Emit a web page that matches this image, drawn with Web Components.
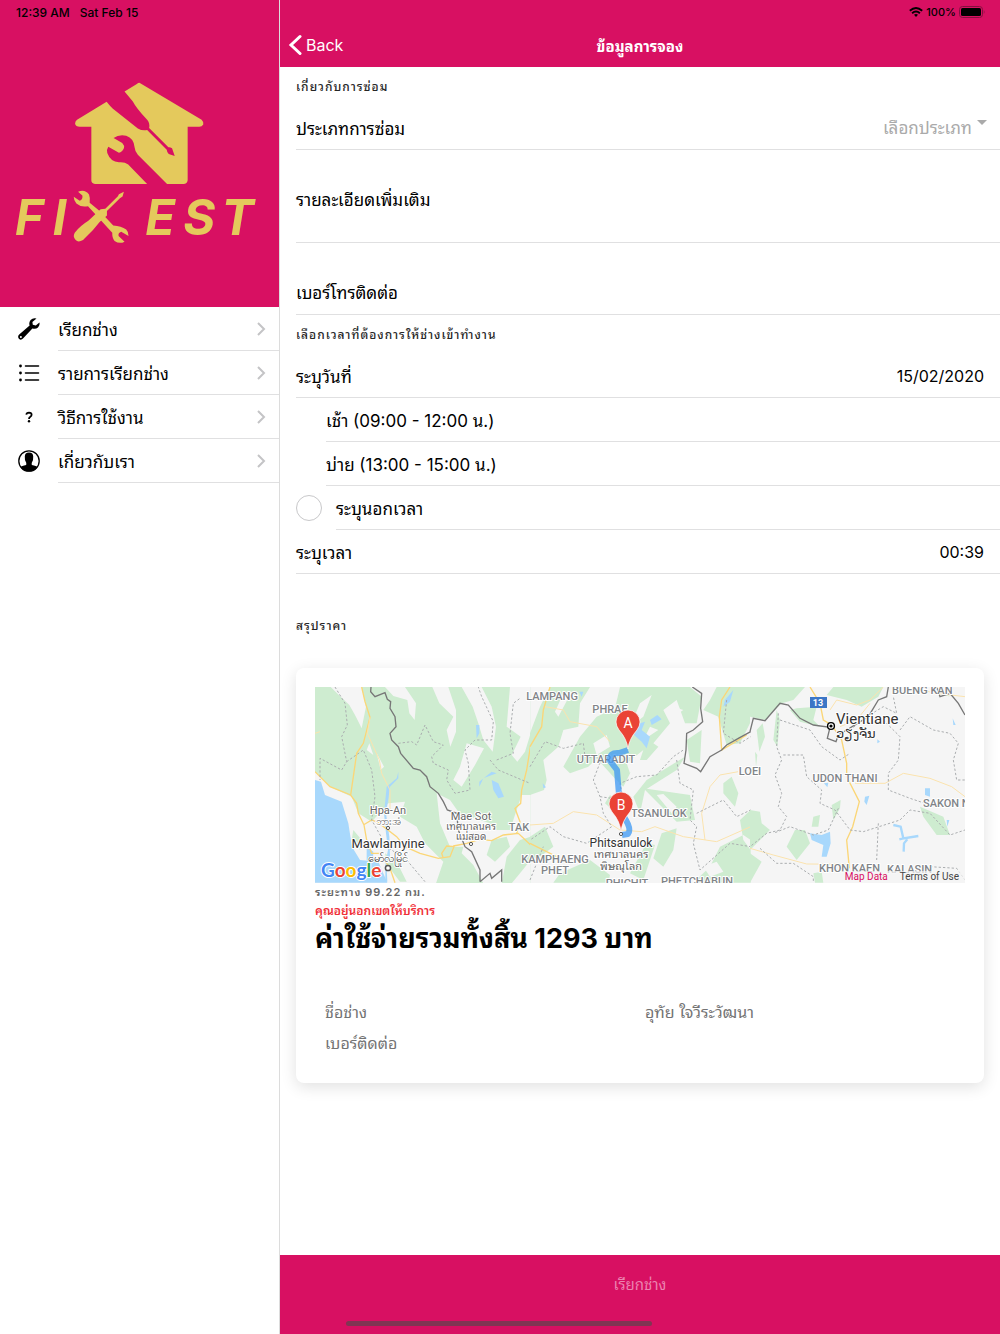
<!DOCTYPE html>
<html lang="th">
<head>
<meta charset="utf-8">
<meta name="viewport" content="width=device-width, initial-scale=1">
<title>FIXEST</title>
<style>
    body {
        margin: 0;
        font-family: Inter, "Noto Sans Thai Looped", Loma, Waree, "Noto Sans Thai", "Noto Sans", sans-serif;
        font-size: 17px;
        color: #000;
        --brand: #d81062;
        --line: #e0e0e1;
    }
</style>
</head>
<body>
<booking-app></booking-app>

<script>
class BrandLogo extends HTMLElement {
    connectedCallback() {
        this.attachShadow({ mode: 'open' });
        this.shadowRoot.innerHTML = `
            <style>
                :host { display: block; }
                svg { display: block; width: 100%; fill: #e4c95c; }
                text { font: italic 700 147px Inter, sans-serif; }
            </style>
            <svg viewBox="0 0 840 600" role="img" aria-label="FIXEST">
                <path d="M421 69 L607 180 Q614 187 612 194 Q608 201 600 201 L565 201 L565 362 Q564 373 552 373 L503 373 L415 285 Q406 275 405 262 Q403 236 380 228 Q358 223 342 235 L368 250 Q376 258 373 266 Q368 278 358 279 L326 261 Q320 270 323 280 Q333 307 358 308 Q375 306 386 315 L443 373 L286 373 Q275 372 275 362 L275 201 L240 201 Q228 201 226 192 Q226 184 232 180 L321 126 Q332 140 340 147 L415 206 Q428 214 443 211 L502 270 Q503 279 508 283 L526 289 L518 266 Q512 262 507 263 L449 205 Q452 190 443 180 Q410 145 400 125 L375 95 L412 72 Q417 68 421 69Z"/>
                <path d="M235 397 Q255 388 268 405 Q272 415 270 430 L300 455 L341 498 Q365 500 380 510 Q388 518 387 530 L365 517 Q355 520 357 530 L375 547 Q360 555 345 545 Q337 535 338 520 L265 440 Q245 445 230 432 Q222 424 222 412 L240 424 Q250 420 248 408Z"/>
                <path d="M303 449 L317 448 L355 410 L358 404 L373 397 L369 411 L361 416 L322 455 L322 468 L300 488 Q290 500 280 512 L250 542 Q235 551 228 542 Q218 532 225 520 Q240 500 266 484Z"/>
                <text x="45 159" y="527">FI</text>
                <text x="437 552 666" y="527">EST</text>
            </svg>
        `;
    }
}

class MenuItem extends HTMLElement {
    connectedCallback() {
        this.attachShadow({ mode: 'open' });
        this.shadowRoot.innerHTML = `
            <style>
                :host { display: block; }
                a {
                    display: flex;
                    align-items: stretch;
                    height: 44px;
                    color: inherit;
                    text-decoration: none;
                }
                .icon {
                    display: flex;
                    align-items: center;
                    justify-content: center;
                    width: 58px;
                }
                .inner {
                    flex: 1;
                    display: flex;
                    align-items: center;
                    justify-content: space-between;
                    padding-right: 13px;
                    border-bottom: 1px solid var(--line);
                    box-sizing: border-box;
                }
                .chevron {
                    width: 9px;
                    height: 14px;
                    fill: none;
                    stroke: #c4c4c6;
                    stroke-width: 2;
                }
            </style>
            <a href="${this.getAttribute('href')}">
                <span class="icon"><slot name="icon"></slot></span>
                <span class="inner">
                    <span><slot></slot></span>
                    <svg class="chevron" viewBox="0 0 9 14"><path d="M1 1 L7 7 L1 13"/></svg>
                </span>
            </a>
        `;
    }
}

class SideMenu extends HTMLElement {
    connectedCallback() {
        this.attachShadow({ mode: 'open' });
        this.shadowRoot.innerHTML = `
            <style>
                :host {
                    display: block;
                    box-sizing: border-box;
                    border-right: 1px solid #dcdcdc;
                    background: #fff;
                }
                header {
                    background: var(--brand);
                    padding-bottom: 48px;
                }
                .status {
                    display: flex;
                    gap: 10px;
                    height: 24px;
                    align-items: center;
                    padding-left: 16px;
                    font: 500 12px Inter, sans-serif;
                }
                brand-logo { padding-top: 36px; }
                svg { width: 22px; height: 22px; }
            </style>
            <header>
                <div class="status"><span>12:39 AM</span><span>Sat Feb 15</span></div>
                <brand-logo></brand-logo>
            </header>
            <nav>
                <menu-item href="#call">
                    <svg slot="icon" viewBox="0 0 22 22"><path d="M18.5 .6 Q15 -.4 12.6 2 Q10.6 4.4 11.6 7.4 L1.2 16.6 Q-.8 18.6 .9 20.8 Q3 22.6 5 20.6 L14.4 10.4 Q17.6 11.6 20 9.4 Q22.2 7.2 21.4 4.4 L17.8 7.4 L14.8 6.8 L14.4 4Z"/><circle cx="2.9" cy="19" r="1" fill="#fff"/></svg>
                    เรียกช่าง
                </menu-item>
                <menu-item href="#orders">
                    <svg slot="icon" viewBox="0 0 22 22"><path d="M7.5 4h13M7.5 11h13M7.5 18h13" stroke="#000" stroke-width="1.6" stroke-linecap="round"/><circle cx="2.5" cy="4" r="1.4"/><circle cx="2.5" cy="11" r="1.4"/><circle cx="2.5" cy="18" r="1.4"/></svg>
                    รายการเรียกช่าง
                </menu-item>
                <menu-item href="#howto">
                    <svg slot="icon" viewBox="0 0 22 22"><path d="M8.3 8.7 Q8.5 6.6 11 6.6 Q13.6 6.7 13.6 8.7 Q13.6 9.8 12.3 10.7 Q11 11.5 11 13" fill="none" stroke="#000" stroke-width="1.8"/><circle cx="11" cy="15.2" r="1.2"/></svg>
                    วิธีการใช้งาน
                </menu-item>
                <menu-item href="#about">
                    <svg slot="icon" viewBox="0 0 22 22"><circle cx="11" cy="11" r="10.2" fill="none" stroke="#000" stroke-width="1.3"/><path d="M6.8 6.5 Q6.8 2.6 11 2.6 Q15.2 2.6 15.2 6.5 Q15.6 10 13.7 13 L13.8 15 Q18.5 16 19.4 17.2 Q16 21.5 11 21.5 Q6 21.5 2.6 17.2 Q3.5 16 8.2 15 L8.3 13 Q6.4 10 6.8 6.5Z"/></svg>
                    เกี่ยวกับเรา
                </menu-item>
            </nav>
        `;
    }
}

class PageHeader extends HTMLElement {
    connectedCallback() {
        this.attachShadow({ mode: 'open' });
        this.shadowRoot.innerHTML = `
            <style>
                :host {
                    display: block;
                    background: var(--brand);
                    color: #fff;
                }
                .status {
                    display: flex;
                    justify-content: flex-end;
                    align-items: center;
                    gap: 3px;
                    height: 24px;
                    padding-right: 15px;
                    color: #000;
                    font: 500 11px Inter, sans-serif;
                }
                .wifi { width: 14px; height: 10px; }
                .battery { width: 26px; height: 12px; }
                .toolbar {
                    display: grid;
                    grid-template-columns: 1fr auto 1fr;
                    align-items: center;
                    height: 41px;
                    padding: 0 8px 2px;
                }
                button {
                    display: flex;
                    align-items: center;
                    gap: 4px;
                    justify-self: start;
                    border: 0;
                    padding: 0;
                    background: none;
                    color: inherit;
                    font: 400 16px Inter, sans-serif;
                }
                button svg { width: 14px; height: 22px; }
                h1 { margin: 0; padding-top: 1px; font-size: 15px; font-weight: 700; }
            </style>
            <div class="status">
                <svg class="wifi" viewBox="0 0 14 10" fill="none" stroke="#000" stroke-width="1.9"><path d="M.8 3.8 Q7 -1.8 13.2 3.8"/><path d="M3.1 6.2 Q7 2.8 10.9 6.2"/><path d="M5 7.8 Q7 6.2 9 7.8 L7 10Z" fill="#000" stroke="none"/></svg>
                <span>100%</span>
                <svg class="battery" viewBox="0 0 26 12"><rect x=".5" y=".5" width="23" height="11" rx="3" fill="none" stroke="#84103f"/><rect x="2" y="2" width="20" height="8" rx="1.5"/><path d="M24.8 4 Q26.2 6 24.8 8Z" fill="#84103f"/></svg>
            </div>
            <div class="toolbar">
                <button type="button">
                    <svg viewBox="0 0 14 22" fill="none" stroke="#fff" stroke-width="3" stroke-linecap="round"><path d="M12 2.5 L3 11 L12 19.5"/></svg>
                    Back
                </button>
                <h1><slot></slot></h1>
            </div>
        `;
    }
}

class ListHeader extends HTMLElement {
    connectedCallback() {
        this.attachShadow({ mode: 'open' });
        this.shadowRoot.innerHTML = `
            <style>
                :host { display: block; }
                h2 {
                    display: flex;
                    align-items: center;
                    height: 37px;
                    margin: 0;
                    padding: 0 0 2px 16px;
                    font-size: 12px;
                    font-weight: 500;
                    letter-spacing: 1px;
                    color: #262626;
                }
            </style>
            <h2><slot></slot></h2>
        `;
    }
}

// A row with an inset bottom line; "start" holds what sits left of the line.
class ListRow extends HTMLElement {
    connectedCallback() {
        this.attachShadow({ mode: 'open' });
        this.shadowRoot.innerHTML = `
            <style>
                :host {
                    display: flex;
                    align-items: stretch;
                    min-height: 44px;
                    padding-left: 16px;
                }
                .start { display: flex; align-items: center; }
                .inner {
                    flex: 1;
                    display: flex;
                    align-items: center;
                    gap: 16px;
                    padding: var(--row-padding, 0) 16px 0 0;
                    border-bottom: 1px solid var(--line);
                }
            </style>
            <div class="start"><slot name="start"></slot></div>
            <div class="inner"><slot></slot></div>
        `;
    }
}

class RouteMap extends HTMLElement {
    connectedCallback() {
        this.attachShadow({ mode: 'open' });
        this.shadowRoot.innerHTML = `
            <style>
                :host { display: block; position: relative; }
                svg { display: block; width: 100%; background: #f5f5f5; }
                .green path { fill: #ceecd0; }
                .land path { fill: #f5f5f5; }
                .water path { fill: #a8d8fc; }
                .road path { fill: none; stroke: #fbd677; stroke-width: 4; }
                .road .minor { stroke: #fbe3ae; stroke-width: 3; }
                .dash path { fill: none; stroke: #aaadaf; stroke-width: 3; stroke-dasharray: 7 6; }
                .border path { fill: none; stroke: #777; stroke-width: 4; }
                text {
                    font-family: Roboto, "Noto Sans Thai Looped", Loma, Waree, "Noto Sans Thai", "Noto Sans", sans-serif;
                    fill: #666;
                    stroke: #fff;
                    stroke-width: 2px;
                    paint-order: stroke;
                    stroke-linejoin: round;
                }
                .area text { font-size: 11px; font-weight: 500; fill: #818488; }
                .mid text { text-anchor: middle; }
                .town text { font-size: 11px; }
                .town .local { font-size: 10px; }
                .city text { font-size: 13px; fill: #333; }
                .city .local { font-size: 11px; }
                .city .capital { font-size: 15px; }
                .city .small { font-size: 12px; }
                .pin text { font-size: 14px; fill: #fff; stroke: none; text-anchor: middle; }
                .badge { font-size: 9px; font-weight: 700; fill: #fff; stroke: none; text-anchor: middle; }
                .google { font: 700 19px Lato, sans-serif; }
                footer {
                    position: absolute;
                    right: 0;
                    bottom: 0;
                    display: flex;
                    gap: 12px;
                    padding: 0 6px 0 4px;
                    background: rgba(245, 245, 245, 0.7);
                    font: 10px/12px Roboto, sans-serif;
                }
                a { color: #444; text-decoration: none; }
                a.data { color: var(--brand); }
            </style>
            <svg viewBox="0 0 650 196" role="img" aria-label="Route map">
                <g transform="matrix(.33333 0 0 .33333 -5 -7)">
                    <g class="green"><path d="M15 21H662V610H15Z"/></g>
                    <g class="land">
                        <path d="M62 21H155L168 80 155 145 135 105 118 75 92 50Z"/>
                        <path d="M225 21H285L318 70 314 120 298 100 292 60 250 48Z"/>
                        <path d="M367 21H415L438 90 438 155 421 200 410 150 430 110 388 70Z"/>
                        <path d="M455 21H515L545 80 558 140 548 215 520 180 505 130 488 80Z"/>
                        <path d="M600 21H662V160L645 215 622 245 605 225 632 170 590 140Z"/>
                        <path d="M15 275 60 320 125 350 145 400 185 425 235 370 285 365 270 410 320 440 345 490 400 545 378 610H15Z"/>
                        <path d="M470 190 522 205 495 255 455 320 430 300 450 260Z"/>
                        <path d="M380 340 420 360 448 400 540 430 560 450 600 450 635 345 662 345V610H520L490 555 455 520 460 500 420 500 390 430Z"/>
                        <path d="M200 220 222 260 212 270ZM178 190 190 225 170 210Z"/>
                    </g>
                    <g class="green">
                        <path d="M545 480 590 470 600 500 555 545 530 525Z"/>
                        <path d="M590 530 630 480 662 470V540L630 580 605 610H575Z"/>
                        <path d="M130 450 155 480 150 510 125 480ZM225 520 260 545 290 605H270L232 555Z"/>
                    </g>
                    <g class="water">
                        <path d="M15 300 33 305 45 345 95 365 115 430 126 500 150 540 205 545 232 608H15Z"/>
                        <path d="M170 500 190 515 188 550 170 540ZM498 135H508V160L500 175ZM545 300 565 310 582 350 565 355 550 330ZM508 305 545 275 560 280 520 295 508 320Z"/>
                        <path d="M265 275V295L240 320 236 350 228 400 238 470 240 530 230 560 232 605 226 605 226 555 234 510 228 460 222 400 230 320 260 295Z"/>
                    </g>
                    <g class="road">
                        <path d="M155 21 165 65 180 112 160 190 140 220 130 290 122 345M15 275 60 320 122 345 140 370 145 400 162 435M160 435 185 420 205 428 260 470 285 500 330 520 385 535 420 530 432 500 410 498 395 520 400 535M430 498 470 490 510 478 545 482 580 465 625 460 662 495M662 195 650 270 635 330 632 370 615 385 630 425 620 460M162 435 170 480 185 520H210L240 565 255 608"/>
                        <path class="minor" d="M180 112 172 160 208 240 215 280 240 330 240 390M15 160 30 155"/>
                    </g>
                    <g class="dash"><path d="M75 21 105 70 112 135 95 170 110 245 95 270 30 235 30 300M110 245 160 210 185 270 195 350 185 420 230 500 290 540 345 605M265 190 305 185 320 195 345 135 370 185 400 195 365 230 370 250 415 270 410 300 435 340 480 330 475 250 465 210 495 180 545 180 550 125 515 50 505 21M560 240 610 220 600 160 610 70 630 55M540 240 565 270 660 310"/></g>
                    <g class="border"><path d="M183 21 182 35 195 50 225 38 232 58 242 65 240 85 255 110 258 140 240 160 245 180 265 200 272 220 310 265 330 270 350 290 360 320 385 340 400 365 412 390 440 400 445 450 465 500 485 515 510 570V605M510 605 540 580 545 595 575 570V605"/></g>
                </g>
                <g transform="matrix(.33333 0 0 .33333 215 -7)">
                    <g class="green">
                        <path d="M0 160 30 80 60 21H180L150 70 145 140 100 150 85 200 40 240 50 300 42 330 0 345Z"/>
                        <path d="M150 170 200 110 255 85 270 21H480L515 50 500 130 465 130 440 60 400 90 420 130 370 190 385 200 350 240 320 240 280 320 250 290 200 235 175 260 120 280 100 260Z"/>
                        <path d="M470 180 515 150 510 250 480 245ZM350 300 400 270 465 230 440 270 345 330 330 400 310 350Z"/>
                        <path d="M0 470 45 440 70 500 30 530 0 540ZM225 370 240 345 290 390 275 415ZM90 580 180 540 240 585 235 608H70Z"/>
                        <path d="M395 460 440 445 430 510 400 560 370 535ZM340 325 480 345 495 420 440 425ZM580 310 605 290 625 340 615 380 580 340Z"/>
                        <path d="M520 90 540 60 560 21H660V130L630 190 590 195 565 110ZM570 500 640 465 662 480V608H490L540 560ZM350 490 375 495 340 600 300 580ZM662 390 630 420 640 480 662 510Z"/>
                    </g>
                    <g class="land">
                        <path d="M100 40 125 35 85 110 75 95ZM330 70 365 45 340 110 300 140ZM360 140 385 150 340 180ZM190 190 230 165 240 200 200 225ZM290 250 340 210 330 240 300 280ZM430 80 460 90 430 110ZM380 345 400 342 440 380 425 400ZM520 560 560 545 580 575 540 590Z"/>
                    </g>
                    <g class="water">
                        <path d="M312 165 330 130 345 125 335 150 360 170 350 205 335 185ZM360 120 382 105 395 118 365 135ZM585 60 610 30 600 65 580 80ZM148 35H160L155 50ZM38 310 48 322 40 325Z"/>
                    </g>
                    <g class="road">
                        <path d="M60 21 40 90 35 140 0 200M600 21 575 60 568 110 575 210 650 165M0 490 80 530"/>
                        <path class="minor" d="M0 435 70 430 130 395 200 405 270 450 335 455 375 440 460 470 560 485 662 440M45 80 100 90 120 125 200 140 240 185M525 480 515 400 540 320 570 285 625 275"/>
                    </g>
                    <g class="dash"><path d="M0 260 45 185 100 205 160 190 165 230 215 235 190 300 210 350 220 400 245 440 170 490 100 470 60 440 0 480M210 350 280 360 270 310 320 290 380 285 430 230 460 210M440 240 450 310 490 330 480 420 500 440 490 490 510 570 600 490 662 500M500 400 580 360 620 410 662 390M590 60 580 160 630 190 662 170M0 600 40 500"/></g>
                    <g class="border"><path d="M487 21 515 40 512 85 518 125 490 150 470 160 468 210 462 250 500 265 512 275 540 230 575 210 590 195 625 175 662 155"/></g>
                </g>
                <g transform="matrix(.33333 0 0 .33333 435 -7)">
                    <g class="green">
                        <path d="M0 21H165L130 60 95 70 45 120 0 110ZM140 85 200 80 190 120 210 140 150 125 120 90ZM230 45 250 21H400L385 50 335 80 290 60Z"/>
                        <path d="M20 150 38 130 45 170 28 215ZM80 90 90 120 82 200 70 180ZM245 375 272 360 270 385 250 420ZM190 410 210 405 205 440 185 440Z"/>
                        <path d="M0 390 30 395 35 430 60 450 0 510ZM135 450 165 450 180 490 140 540 110 500ZM510 380 580 410 600 465 560 465 520 410ZM0 520 35 545 0 608ZM190 580 215 575 220 608H195ZM15 215 22 225 18 260ZM560 21 600 50 570 40Z"/>
                    </g>
                    <g class="water">
                        <path d="M180 460 215 465 240 455 242 490 230 530 215 530 220 495 185 480ZM345 350 358 347 350 375 343 365ZM525 325 540 325 540 350 525 345ZM608 115 617 135 610 135ZM222 310 235 308 232 322ZM590 420 598 420 592 440ZM382 178 390 185 382 190Z"/>
                    </g>
                    <path d="M430 435 452 440 460 475 505 468M472 478 462 490 461 515M460 475 448 478" fill="none" stroke="#a8d8fc" stroke-width="7"/>
                    <g class="road">
                        <path d="M180 21 210 70 220 120 245 135 275 180 290 250 290 290 328 365 308 440 290 480 298 565"/>
                        <path class="minor" d="M315 310H405L460 280 540 295 605 320 645 350M0 505 70 525 170 552 300 553M240 90 260 60 320 75 360 60 400 21M360 70 320 120 270 140M470 21 560 40 645 50"/>
                    </g>
                    <g class="dash"><path d="M85 100 80 200 95 240 75 285 95 340 85 380 110 410 90 450 50 460 0 500M90 120 180 150 215 200 270 240 300 220M100 225 160 225 170 290 215 330 210 370 255 390 300 450 340 455 450 420 480 390 540 400 600 465 645 450M265 385 235 450 190 465 120 440 70 460M400 120 450 170 445 240 415 280 415 330 480 355 540 375M450 150 480 110 550 150 600 160 625 190 610 240 620 300 645 300M385 430 380 540M300 150 350 110 400 80 440 100 430 50M30 505 80 550 130 550 190 590V608M540 560 620 565 645 600"/></g>
                    <g class="border"><path d="M0 155 10 115 45 122 90 70 115 75 150 115 190 135 240 142 232 175 258 185 265 165 290 150 355 110 385 60 410 50 415 21M560 21 570 50 600 40 625 70 645 105"/></g>
                </g>
                <g class="area">
                    <g class="mid">
                        <text x="237" y="13">LAMPANG</text>
                        <text x="295" y="26">PHRAE</text>
                        <text x="291" y="76">UTTARADIT</text>
                        <text x="435" y="88">LOEI</text>
                        <text x="530" y="95">UDON THANI</text>
                        <text x="204" y="144">TAK</text>
                        <text x="240" y="176">KAMPHAENG</text>
                        <text x="240" y="187">PHET</text>
                        <text x="312" y="200">PHICHIT</text>
                        <text x="382" y="198">PHETCHABUN</text>
                    </g>
                    <text x="577" y="7">BUENG KAN</text>
                    <text x="316" y="130">TSANULOK</text>
                    <text x="608" y="120">SAKON N</text>
                    <text x="504" y="185">KHON KAEN</text>
                    <text x="572" y="186">KALASIN</text>
                </g>
                <path d="M313 63 L304 66 Q294 65 295 74 L302 83 L304 108 L309 130 Q317 142 313 147 L307 148" fill="none" stroke="#3b97f3" stroke-opacity=".75" stroke-width="6" stroke-linejoin="round"/>
                <g class="town mid">
                    <text x="73" y="127">Hpa-An</text>
                    <text class="local" x="73" y="138">ဘားအံ</text>
                    <text x="156" y="133">Mae Sot</text>
                    <text class="local" x="156" y="143">เทศบาลนคร</text>
                    <text class="local" x="156" y="153">แม่สอด</text>
                    <text x="306" y="171">เทศบาลนคร</text>
                    <text x="306" y="183">พิษณุโลก</text>
                </g>
                <g class="city">
                    <text x="73" y="161" text-anchor="middle">Mawlamyine</text>
                    <text class="local" x="73" y="175" text-anchor="middle">မော်လမြိုင်</text>
                    <text class="capital" x="521" y="37">Vientiane</text>
                    <text x="521" y="51">ວຽງຈັນ</text>
                    <text class="small" x="306" y="160" text-anchor="middle">Phitsanulok</text>
                </g>
                <g fill="#fff" stroke="#555">
                    <circle cx="73" cy="141" r="1.6"/><circle cx="156" cy="157" r="1.6"/>
                    <circle cx="73" cy="181" r="2.6" stroke-width="1.5"/><circle cx="306" cy="147" r="1.6"/>
                </g>
                <circle cx="516" cy="39" r="3.4" fill="#fff" stroke="#000" stroke-width="1.4"/><circle cx="516" cy="39" r="1.6"/>
                <rect x="495" y="10" width="17" height="11" fill="#3b76c6"/>
                <text class="badge" x="503" y="19">13</text>
                <g class="pin">
                    <path d="M313 62 Q312 52 304 43 Q301 39 301 35 A12 12 0 0 1 325 35 Q325 39 322 43 Q314 52 313 62Z" fill="#ea4335" stroke="#fff" stroke-width=".7"/>
                    <text x="313" y="41">A</text>
                    <path d="M306 145 Q305 134 297 125 Q294 121 294 117 A12 12 0 0 1 318 117 Q318 121 315 125 Q307 134 306 145Z" fill="#ea4335" stroke="#fff" stroke-width=".7"/>
                    <text x="306" y="123">B</text>
                </g>
                <text class="google" x="6" y="190"><tspan fill="#4285f4">G</tspan><tspan fill="#ea4335">o</tspan><tspan fill="#fbbc05">o</tspan><tspan fill="#4285f4">g</tspan><tspan fill="#34a853">l</tspan><tspan fill="#ea4335">e</tspan></text>
            </svg>
            <footer><a class="data" href="#map-data">Map Data</a><a href="#terms">Terms of Use</a></footer>
        `;
    }
}

class PriceCard extends HTMLElement {
    connectedCallback() {
        this.attachShadow({ mode: 'open' });
        this.shadowRoot.innerHTML = `
            <style>
                :host {
                    display: block;
                    margin: 23px 16px 0;
                    padding: 19px 19px 24px;
                    border-radius: 8px;
                    background: #fff;
                    box-shadow: 0 4px 16px rgba(0, 0, 0, 0.12);
                }
                p {
                    margin: 0;
                    font-size: 12px;
                    font-weight: 600;
                    line-height: 20px;
                    color: #666;
                }
                p.distance {
                    font-size: 11px;
                    line-height: 18px;
                    letter-spacing: 1px;
                }
                p.warn { color: #f03038; }
                h2 {
                    margin: 0 0 40px;
                    font-size: 27px;
                    line-height: 36px;
                    font-weight: 700;
                }
                dl {
                    display: grid;
                    grid-template-columns: 1fr 1fr;
                    margin: 0;
                    padding: 0 5px;
                    font-size: 16px;
                    color: #737373;
                }
                dt, dd { margin: 0; padding: 0 5px; line-height: 31px; }
            </style>
            <route-map></route-map>
            <p class="distance">ระยะทาง 99.22 กม.</p>
            <p class="warn">คุณอยู่นอกเขตให้บริการ</p>
            <h2>ค่าใช้จ่ายรวมทั้งสิ้น 1293 บาท</h2>
            <dl>
                <dt>ชื่อช่าง</dt><dd>อุทัย ใจวีระวัฒนา</dd>
                <dt>เบอร์ติดต่อ</dt><dd></dd>
            </dl>
        `;
    }
}

class BookingForm extends HTMLElement {
    connectedCallback() {
        this.attachShadow({ mode: 'open' });
        this.shadowRoot.innerHTML = `
            <style>
                :host { display: block; background: #fff; }
                label { white-space: nowrap; }
                input, select, textarea {
                    appearance: none;
                    border: 0;
                    margin: 0;
                    padding: 0;
                    background: none;
                    font: inherit;
                    color: inherit;
                    outline: 0;
                }
                input[type=text], input[type=tel], textarea { flex: 1; min-width: 0; }
                textarea { resize: none; height: 44px; }
                .value { text-align: right; font-size: 16px; }
                .type {
                    flex: 1;
                    display: flex;
                    align-items: center;
                    gap: 5px;
                }
                select { flex: 1; height: 30px; text-align-last: right; color: #aaa; }
                .caret {
                    width: 10px;
                    height: 5px;
                    margin: 0 -3px 10px 0;
                    background: #aaa;
                    clip-path: polygon(0 0, 100% 0, 50% 100%);
                }
                input[type=radio] { width: 14px; height: 14px; margin-right: 16px; }
                input[type=checkbox] {
                    width: 26px;
                    height: 26px;
                    margin-right: 14px;
                    border: 1px solid #c8c8ca;
                    border-radius: 50%;
                }
                .details { min-height: 93px; --row-padding: 4px; }
                .phone { min-height: 72px; --row-padding: 26px; }
                .summary { margin-top: 32px; }
            </style>
            <form>
                <list-header>เกี่ยวกับการซ่อม</list-header>
                <list-row>
                    <label for="type">ประเภทการซ่อม</label>
                    <div class="type">
                        <select id="type"><option>เลือกประเภท</option></select>
                        <span class="caret"></span>
                    </div>
                </list-row>
                <list-row class="details">
                    <label for="details">รายละเอียดเพิ่มเติม</label>
                    <textarea id="details"></textarea>
                </list-row>
                <list-row class="phone">
                    <label for="phone">เบอร์โทรติดต่อ</label>
                    <input type="tel" id="phone">
                </list-row>

                <list-header>เลือกเวลาที่ต้องการให้ช่างเข้าทำงาน</list-header>
                <list-row>
                    <label for="date">ระบุวันที่</label>
                    <input type="text" class="value" id="date" value="15/02/2020">
                </list-row>
                <list-row>
                    <input slot="start" type="radio" name="slot" id="morning">
                    <label for="morning">เช้า (09:00 - 12:00 น.)</label>
                </list-row>
                <list-row>
                    <input slot="start" type="radio" name="slot" id="afternoon">
                    <label for="afternoon">บ่าย (13:00 - 15:00 น.)</label>
                </list-row>
                <list-row>
                    <input slot="start" type="checkbox" id="custom">
                    <label for="custom">ระบุนอกเวลา</label>
                </list-row>
                <list-row>
                    <label for="time">ระบุเวลา</label>
                    <input type="text" class="value" id="time" value="00:39">
                </list-row>

                <list-header class="summary">สรุปราคา</list-header>
            </form>
            <price-card></price-card>
        `;
    }
}

class SubmitBar extends HTMLElement {
    connectedCallback() {
        this.attachShadow({ mode: 'open' });
        this.shadowRoot.innerHTML = `
            <style>
                :host {
                    display: block;
                    padding: 8px 8px 27px;
                    background: var(--brand);
                }
                button {
                    display: block;
                    width: 100%;
                    height: 44px;
                    border: 0;
                    padding: 0 0 4px;
                    background: none;
                    font: inherit;
                    font-size: 15px;
                    color: #ec83b0;
                }
            </style>
            <button type="submit" disabled><slot></slot></button>
        `;
    }
}

class BookingApp extends HTMLElement {
    connectedCallback() {
        this.attachShadow({ mode: 'open' });
        this.shadowRoot.innerHTML = `
            <style>
                :host {
                    display: grid;
                    grid-template-columns: 28% 1fr;
                    min-height: 100vh;
                    position: relative;
                }
                main {
                    display: flex;
                    flex-direction: column;
                    min-width: 0;
                }
                booking-form { flex: 1; padding-bottom: 24px; }
                .home {
                    position: absolute;
                    left: 50%;
                    bottom: 8px;
                    width: 306px;
                    height: 5px;
                    margin-left: -154px;
                    border-radius: 3px;
                    background: #803553;
                }
            </style>
            <side-menu></side-menu>
            <main>
                <page-header>ข้อมูลการจอง</page-header>
                <booking-form></booking-form>
                <submit-bar>เรียกช่าง</submit-bar>
            </main>
            <div class="home"></div>
        `;
    }
}

customElements.define('brand-logo', BrandLogo);
customElements.define('menu-item', MenuItem);
customElements.define('side-menu', SideMenu);
customElements.define('page-header', PageHeader);
customElements.define('list-header', ListHeader);
customElements.define('list-row', ListRow);
customElements.define('route-map', RouteMap);
customElements.define('price-card', PriceCard);
customElements.define('booking-form', BookingForm);
customElements.define('submit-bar', SubmitBar);
customElements.define('booking-app', BookingApp);
</script>
</body>
</html>
